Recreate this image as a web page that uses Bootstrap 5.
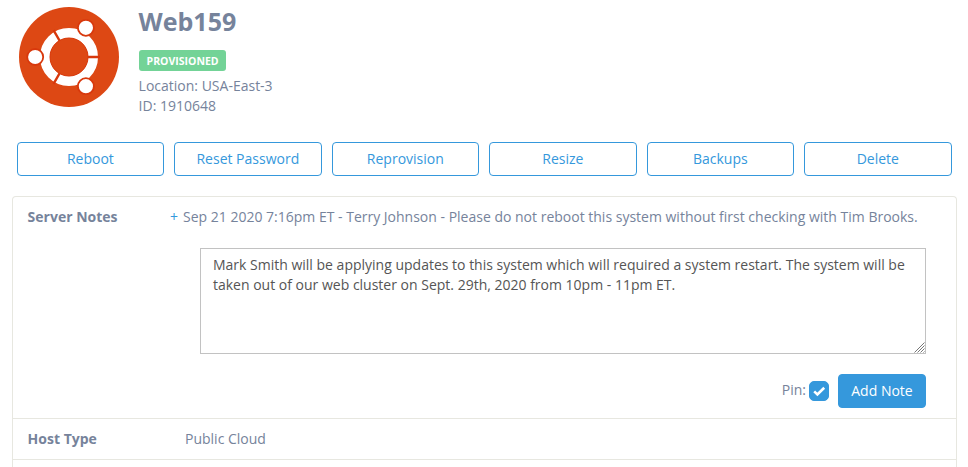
<!DOCTYPE html>
<html lang="en">
<head>
<meta charset="utf-8">
<meta name="viewport" content="width=device-width, initial-scale=1">
<title>Web159</title>
<link href="https://cdn.jsdelivr.net/npm/bootstrap@5.3.0/dist/css/bootstrap.min.css" rel="stylesheet">
<style>
html{height:100%;overflow:hidden}
body{font-family:"Open Sans",sans-serif;font-size:14px;line-height:20px;color:#76839b;background:#fff;overflow:hidden;height:100%}
.server-head{padding:7px 0 0 19px;height:142px;flex:none}
.server-logo{width:100px;height:100px}
.server-info{margin-left:19.6px}
.server-name{font-size:25px;line-height:28px;font-weight:700;margin:0 0 15px;color:#76839b}
.status{background:#73d397;font-size:12px;line-height:13px;padding:4px 0 4px 8px;height:21px;width:87px;border-radius:3px;margin-bottom:5px;text-align:left}
.status span{font-size:10.5px;font-weight:700}
.actions{display:grid;grid-template-columns:repeat(6,1fr);gap:10px;padding:0 16.4px 0 16.6px;flex:none}
.btn{font-size:14px;line-height:20px;padding:6px 12px;height:34px;border-radius:4px}
.actions .btn{--bs-btn-color:#3598dc;--bs-btn-border-color:#3598dc;--bs-btn-hover-bg:#3598dc}
.btn-note{--bs-btn-bg:#3598dc;--bs-btn-border-color:#3598dc;--bs-btn-color:#fff;width:88px}
.details{margin:20px 11px 0 12px;border:1px solid #e7e7e0;border-bottom:0;border-radius:4px 4px 0 0;flex:1;min-height:0}
.details-row{border-bottom:1px solid #e7e7e0;padding:10px 15px 10px 14.6px}
.details-row.notes{height:222px}
.label-col{width:157.4px;font-weight:700}
.notes .label-col{width:142.4px}
.plus{color:#3598dc;margin-right:5px}
.note-wrap{width:726px;margin:21px 0 20px 30px}
.note-box{height:106px;border:1px solid #c2c2c2;border-radius:0;padding:6px 12px;font-size:14px;line-height:20px;color:#555;resize:none}
.grip{position:absolute;right:1px;bottom:1px;width:11px;height:11px;pointer-events:none}
.note-foot{width:756px}
.pin-check{width:20px;height:20px;margin:0 9px 0 4px!important;border-radius:5px!important}
.pin-check:checked{background-color:#3598dc;border-color:#3598dc;background-image:url("data:image/svg+xml,%3Csvg xmlns='http://www.w3.org/2000/svg' viewBox='0 0 18 18'%3E%3Cpath fill='none' stroke='%23fff' stroke-width='2.6' d='M4.2 9.4l3.2 3 6.8-6.6'/%3E%3C/svg%3E")}
.pin-label{margin-top:-2px;margin-right:-1px}
</style>
<script src="https://cdn.jsdelivr.net/npm/bootstrap@5.3.0/dist/js/bootstrap.bundle.min.js"></script>
</head>
<body class="d-flex flex-column">
<header class="server-head d-flex align-items-start">
<svg class="server-logo" viewBox="0 0 100 100" aria-hidden="true">
<circle cx="50" cy="50" r="50" fill="#dd4814"/>
<circle cx="50" cy="50" r="24" fill="none" stroke="#fff" stroke-width="10"/>
<path d="M50 50H81M50 50L34.5 23.2M50 50L34.5 76.8" stroke="#d8380c" stroke-width="2.4"/>
<circle cx="50" cy="50" r="19" fill="#dd4814" stroke="#d8380c"/>
<circle cx="50" cy="50" r="18.5" fill="#dd4814"/>
<g fill="#fff" stroke="#d8380c" stroke-width="1.8"><circle cx="16.2" cy="50" r="8"/><circle cx="66.9" cy="20.8" r="8"/><circle cx="66.9" cy="79.2" r="8"/></g>
</svg>
<div class="server-info">
<h1 class="server-name">Web159</h1>
<div class="badge status d-block"><span>PROVISIONED</span></div>
<div>Location: USA-East-3</div>
<div>ID: 1910648</div>
</div>
</header>
<div class="actions">
<button class="btn btn-outline-primary">Reboot</button>
<button class="btn btn-outline-primary">Reset Password</button>
<button class="btn btn-outline-primary">Reprovision</button>
<button class="btn btn-outline-primary">Resize</button>
<button class="btn btn-outline-primary">Backups</button>
<button class="btn btn-outline-primary">Delete</button>
</div>
<main class="details overflow-hidden">
<div class="details-row notes d-flex">
<div class="label-col flex-shrink-0">Server Notes</div>
<div>
<div class="text-nowrap"><span class="plus">+</span>Sep 21 2020 7:16pm ET - Terry Johnson - Please do not reboot this system without first checking with Tim Brooks.</div>
<div class="note-wrap position-relative">
<textarea class="note-box form-control" spellcheck="false">Mark Smith will be applying updates to this system which will required a system restart. The system will be taken out of our web cluster on Sept. 29th, 2020 from 10pm - 11pm ET.</textarea>
<svg class="grip" viewBox="0 0 11 11" aria-hidden="true"><path d="M.5 10.5l10-10M3.5 10.5l7-7M6.5 10.5l4-4M9.5 10.5l1-1" stroke="#777" stroke-width="1" fill="none"/></svg>
</div>
<div class="note-foot d-flex justify-content-end align-items-center">
<label class="pin-label" for="pin">Pin:</label>
<input class="form-check-input pin-check" type="checkbox" id="pin" checked>
<button class="btn btn-primary btn-note text-nowrap px-0">Add Note</button>
</div>
</div>
</div>
<div class="details-row d-flex">
<div class="label-col">Host Type</div>
<div>Public Cloud</div>
</div>
</main>
</body>
</html>
